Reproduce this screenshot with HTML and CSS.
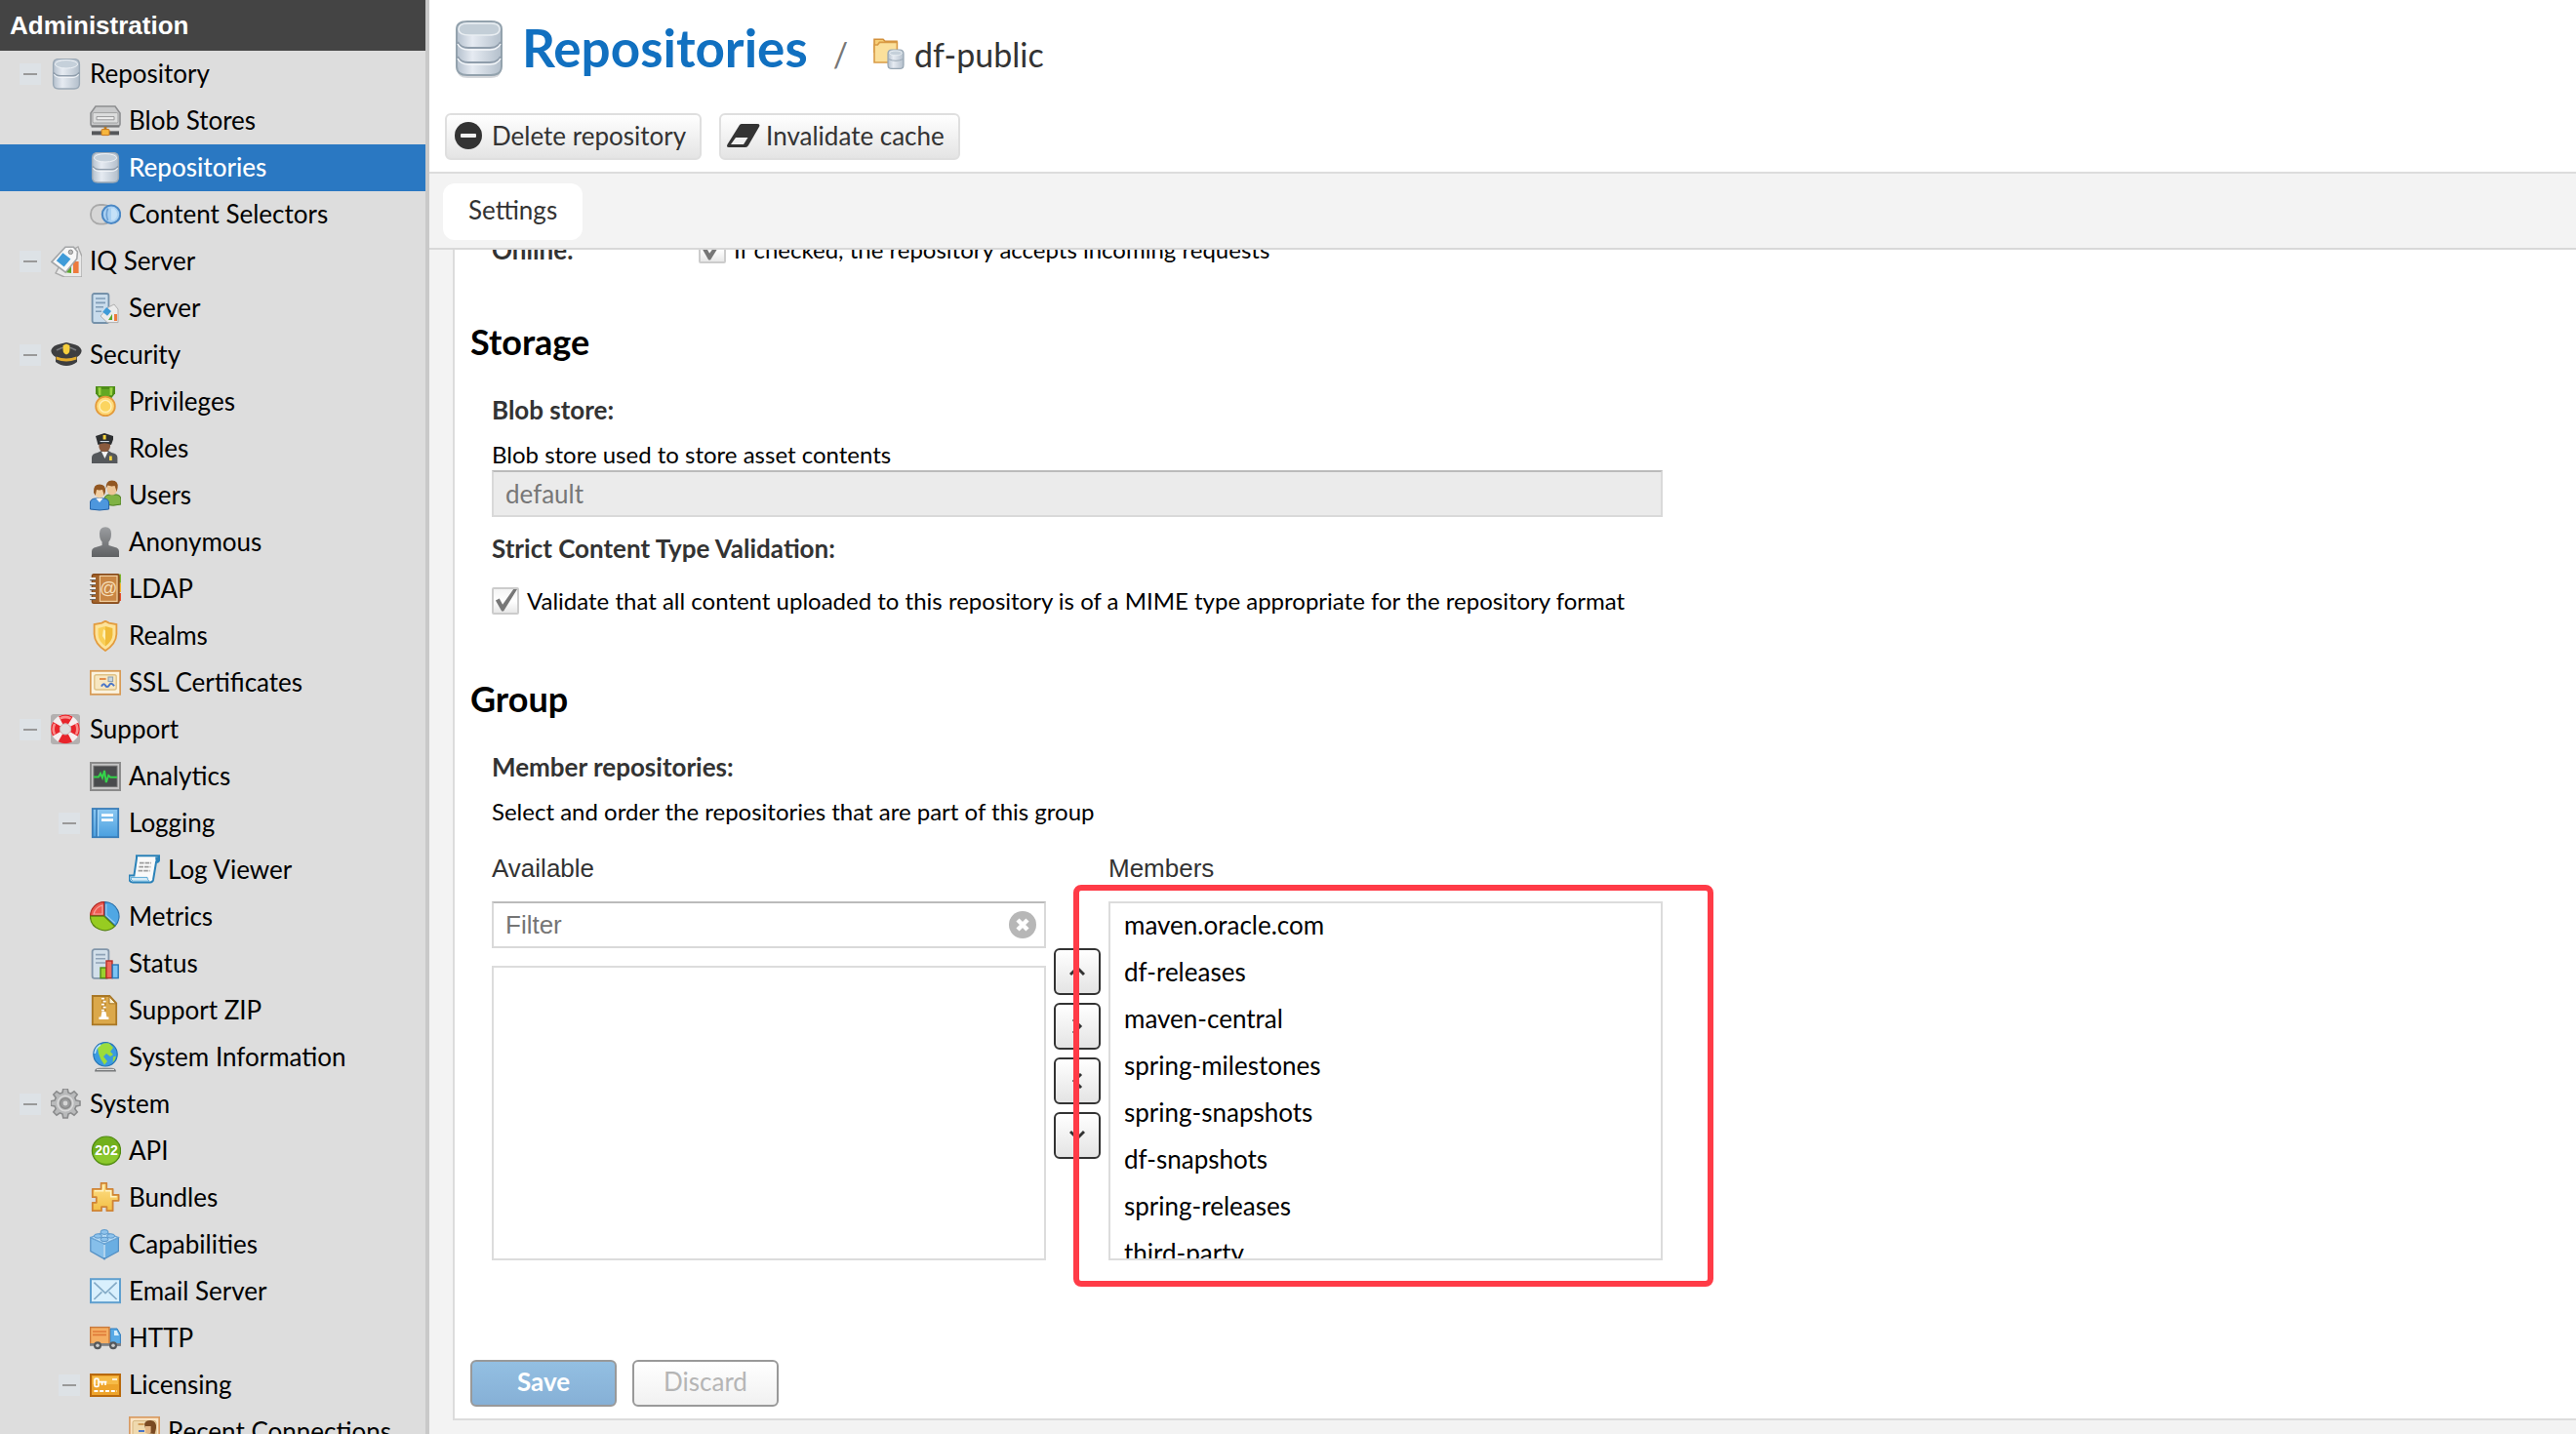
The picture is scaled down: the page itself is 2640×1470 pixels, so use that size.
FILE: index.html
```html
<!DOCTYPE html>
<html lang="en">
<head>
<meta charset="utf-8">
<meta name="viewport" content="width=device-width, initial-scale=1">
<title>Repositories / df-public</title>
<link rel="stylesheet" href="styles.css">
</head>
<body>
<svg class="sprite" aria-hidden="true">
  <defs>
    <linearGradient id="g-steel" x1="0" x2="1" y1="0" y2="0"><stop offset="0" stop-color="#b4c0cd"/><stop offset=".35" stop-color="#e6ebf2"/><stop offset="1" stop-color="#b3bfcb"/></linearGradient>
    <linearGradient id="g-gold" x1="0" x2="0" y1="0" y2="1"><stop offset="0" stop-color="#ffe08a"/><stop offset="1" stop-color="#f2bf45"/></linearGradient>
    <linearGradient id="g-blue" x1="0" x2="0" y1="0" y2="1"><stop offset="0" stop-color="#8cc8f2"/><stop offset="1" stop-color="#4a9fdf"/></linearGradient>
    <linearGradient id="g-grey" x1="0" x2="0" y1="0" y2="1"><stop offset="0" stop-color="#9b9da0"/><stop offset="1" stop-color="#5f6163"/></linearGradient>
  </defs>
  <symbol id="i-db" viewBox="0 0 16 16">
    <path d="M1.300 3Q1.300.3 4 .3h8Q14.700.3 14.700 3v10q0 2.500-2.700 2.500H4Q1.300 15.500 1.300 13z" fill="url(#g-steel)" stroke="#9aa8b5" stroke-width=".7"/>
    <ellipse cx="8" cy="2.900" rx="5.800" ry="2.100" fill="#c5d0da" stroke="#eef2f6" stroke-width=".5"/>
    <path d="M1.500 7.200q1 1.700 3.500 1.700h6q2.500 0 3.500-1.700" fill="none" stroke="#8f9dab" stroke-width=".8"/>
    <path d="M1.700 8.100q1 1.600 3.300 1.600h6q2.300 0 3.300-1.600" fill="none" stroke="#f1f4f8" stroke-width=".6"/>
  </symbol>
  <symbol id="i-db-tall" viewBox="0 0 52 64">
    <path d="M4 10Q4 2 14 2h24q10 0 10 8v40q0 8-10 8H14Q4 58 4 50z" fill="#5a6470" opacity=".25" transform="translate(0 2)"/>
    <path d="M3 10Q3 2 14 2h24q11 0 11 8v38q0 9-11 9H14Q3 57 3 48z" fill="url(#g-steel)" stroke="#93a2ad" stroke-width="2"/>
    <path d="M5 10q0-6 9-6h24q9 0 9 6t-11 6H16Q5 16 5 10z" fill="#c3ced7" stroke="#e9eef2" stroke-width="1.500"/>
    <path d="M4 23q3 6 11 6h22q8 0 11-6M4 38q3 6 11 6h22q8 0 11-6" fill="none" stroke="#8f9dab" stroke-width="1.800"/>
    <path d="M4 25q3 6 11 6h22q8 0 11-6M4 40q3 6 11 6h22q8 0 11-6" fill="none" stroke="#f3f6f9" stroke-width="1.500"/>
  </symbol>
  <symbol id="i-blob" viewBox="0 0 16 16">
    <path d="M3 .5h10l2.500 3.500v5.500q0 1-1 1h-13q-1 0-1-1V4z" fill="#c9cacb" stroke="#8d8e90" stroke-width=".8"/>
    <rect x="1.500" y="3.800" width="13" height="5.200" rx=".6" fill="#dcdddd" stroke="#9fa0a1" stroke-width=".5"/>
    <path d="M3.500 5.800h9v1.600h-9z" fill="#eee" stroke="#979899" stroke-width=".5"/>
    <path d="M.8 10.300h14.400v1H.8z" fill="#77787a"/>
    <path d="M1 13.200h14v2H1z" fill="#55575a"/>
    <path d="M7.300 11h1.400v1.500H7.300z" fill="#b77a24"/>
    <rect x="6" y="12.300" width="4" height="3" rx=".5" fill="#f6b63e" stroke="#c9781c" stroke-width=".5"/>
  </symbol>
  <symbol id="i-selectors" viewBox="0 0 16 16">
    <rect x=".5" y="3" width="11" height="9.800" rx="4.600" fill="#d6d6d6" stroke="#a9a9a9" stroke-width=".9"/>
    <circle cx="11" cy="7.900" r="4.600" fill="#a9d0f2" stroke="#4a87c4" stroke-width="1"/>
    <path d="M9.300 4.800q-1.300 3 0 6.200" fill="none" stroke="#6c9fd2" stroke-width=".8"/>
    <path d="M11 4.800h1.500q1.700 1.400 1.700 3t-1.700 3.100H11z" fill="#c5e1f8"/>
  </symbol>
  <symbol id="i-tags" viewBox="0 0 16 16">
    <path d="M8 4l6-3.500 2 5V16H7l-4.500-2z" fill="#e9e9e9" stroke="#aaa" stroke-width=".7"/>
    <path d="M11.500 8h2.800v6h-2.800z" fill="#ee7a3c"/>
    <path d="M7 13.500L10.500 8v6z" fill="#58a829"/>
    <path d="M7.500.6h4.200l2 2.400-.3 3.600-5.800 7L.5 8.200z" fill="#f7f7f7" stroke="#a3a5a7" stroke-width=".8"/>
    <path d="M6.200 3.600l4 3.200-3.400 4L2.900 7.600z" fill="#3f9bd8"/>
    <circle cx="10.200" cy="3.200" r="1.100" fill="#bbb" stroke="#8a8a8a" stroke-width=".5"/>
  </symbol>
  <symbol id="i-server" viewBox="0 0 16 16">
    <rect x="1.300" y=".5" width="8.400" height="15" rx="1" fill="#c9dcec" stroke="#7591aa" stroke-width=".9"/>
    <path d="M3 3h5M3 5.200h5M3 7.400h4M3 9.600h3" stroke="#7f9cb6" stroke-width=".8"/>
    <path d="M9.500 7.500l3-1.500 2 2.500v6.800H9L5.500 12z" fill="#ececec" stroke="#b0b0b0" stroke-width=".5"/>
    <path d="M8.600 7.500l2.400 2-2 2.400-2.400-2z" fill="#3f9bd8"/>
    <path d="M12.500 11h1.500v3.500h-1.500z" fill="#ee7a3c"/><path d="M9.500 14l2-3v3z" fill="#58a829"/>
  </symbol>
  <symbol id="i-cap" viewBox="0 0 16 16">
    <path d="M.2 5.500Q1 3 5 2.300L8 1.500l3 .8q4 .7 4.800 3.200.1 2-2.300 3.500v2.500Q11 13.500 8 13.500t-5.500-2V9Q.1 7.500.2 5.500z" fill="#3d3e40"/>
    <path d="M3 5.500q5-3 10 0" stroke="#77797c" stroke-width=".8" fill="none"/>
    <path d="M2.800 8.800Q8 10.800 13.200 8.800v1.400q-5.200 2-10.400 0z" fill="#e2ab2e"/>
    <path d="M8 2.200l1.700.8v2.500q0 1.600-1.700 2.300-1.700-.7-1.700-2.300V3z" fill="#f7cf3c"/>
  </symbol>
  <symbol id="i-medal" viewBox="0 0 16 16">
    <path d="M3 0h10v3.600l-2 2.600H5L3 3.600z" fill="#4d8d17"/><path d="M4.200.6h1.600v4H4.500zM10.200.6h1.600l-.3 4h-1.300z" fill="#9bd443"/><path d="M6 1.500h4V5H6z" fill="#62a823"/>
    <circle cx="8" cy="10.200" r="4.900" fill="#ffd978" stroke="#e39a3a" stroke-width=".9"/>
    <circle cx="8" cy="10.200" r="3" fill="#fbd45f" stroke="#fff0b9" stroke-width=".7"/>
  </symbol>
  <symbol id="i-officer" viewBox="0 0 16 16">
    <path d="M1 15.500v-3q0-2 3-2.500L6 9h3.500l1.700 1q3 .5 3 2.500v3z" fill="#55585b"/>
    <path d="M6 9.500h3.400L7.700 13z" fill="#f4f4f4"/>
    <path d="M4.700 4.500h5.800V7Q10 9.600 7.600 9.600 5 9.600 4.700 7z" fill="#8a5a3d"/>
    <path d="M3 1.500L7.500 0 12 1.500v1.800L11 6q-3.400-1.700-6.800 0L3.500 3.300z" fill="#2d2f31"/>
    <path d="M6.800 1h1.500v2.200H6.800zM10 11.800h1.400v2.200H10z" fill="#f5d33d"/><path d="M5.300 4.300h4.600" stroke="#dfe9f4" stroke-width=".5"/>
  </symbol>
  <symbol id="i-users" viewBox="0 0 16 16">
    <path d="M7.500 12.500V10q0-2.200 2.500-2.500h4q2 .3 2 2.500v2.500q-4 1.200-8.500 0z" fill="#7fb244" stroke="#4f7f22" stroke-width=".5"/>
    <ellipse cx="11.400" cy="4.600" rx="2.600" ry="3.200" fill="#edc698"/>
    <path d="M8.300 4.500Q8 .2 11.400.2T14.300 4l-.5 2-1-3q-2 .5-3.600-.2z" fill="#925722"/>
    <path d="M.2 15V12q0-2.300 2.500-2.500h4.600Q9.800 9.700 9.800 12v3q-4.800 1-9.600 0z" fill="#4d97dd" stroke="#2563a6" stroke-width=".5"/>
    <path d="M3.200 9.500h3.500L5 11.500z" fill="#fff"/>
    <ellipse cx="5" cy="6.300" rx="2.500" ry="3" fill="#f2cfa3"/>
    <path d="M2 6.500Q1.700 2.300 5 2.300t3 3.700l-.6 2-.9-3q-1.700.4-3 0L2.900 8z" fill="#925722"/>
  </symbol>
  <symbol id="i-anon" viewBox="0 0 16 16">
    <path d="M5 3.500Q5 .1 8 .1t3 3.400q0 3-1.300 4.300v1.700l4.100 1.200q1.200.5 1.200 1.800v3H1v-3q0-1.300 1.200-1.800l4.100-1.200V7.800Q5 6.500 5 3.500z" fill="url(#g-grey)"/>
  </symbol>
  <symbol id="i-ldap" viewBox="0 0 16 16">
    <path d="M14 .3h2v4.500h-2z" fill="#7db52d"/><path d="M14 5h2v4.500h-2z" fill="#f5b62e"/><path d="M14 10h2v4h-2z" fill="#e5512f"/>
    <rect x="1.200" y=".4" width="13.800" height="14.800" rx=".8" fill="#a2632b" stroke="#85491a" stroke-width=".7"/>
    <rect x="5.200" y="1.200" width="8.800" height="13" fill="#c98644" stroke="#f1cf9f" stroke-width=".6"/>
    <path d="M0 2.500h3M0 5h3M0 7.500h3M0 10h3M0 12.500h3" stroke="#eee" stroke-width="1.100"/><path d="M0 3.300h3M0 5.800h3M0 8.300h3M0 10.800h3M0 13.300h3" stroke="#676767" stroke-width=".5"/>
  </symbol>
  <symbol id="i-shield" viewBox="0 0 16 16">
    <path d="M8 .3l1.800 1 3.900.7v5Q13.500 12 8 15.500 2.500 12 2.300 7V2l3.900-.7z" fill="#fde39a" stroke="#e39b3d" stroke-width=".9"/>
    <path d="M8 3l3.700 1v3.500Q11.500 10.700 8 13.200z" fill="#f0bb38"/><path d="M8 3L4.300 4v3.500Q4.500 10.700 8 13.200z" fill="#f9cf57"/>
    <path d="M7 4.500l1 .8v5L6.500 8z" fill="#fff0b5"/>
  </symbol>
  <symbol id="i-cert" viewBox="0 0 16 16">
    <rect x=".4" y="1.900" width="15.200" height="12" fill="#fbf3df" stroke="#d79a55" stroke-width=".9"/>
    <rect x="2.400" y="3.900" width="11.200" height="7.600" rx="1" fill="#f7e7c1" stroke="#dfc286" stroke-width=".7"/>
    <path d="M5 6h3.300" stroke="#e0853f" stroke-width=".9"/><rect x="9.500" y="5" width="2.300" height="2.300" fill="#c9d6df" stroke="#8aa0b0" stroke-width=".5"/>
    <path d="M6 9.800q1-2 2-.5t2-.2 2.500.5" fill="none" stroke="#4a76c8" stroke-width="1"/>
  </symbol>
  <symbol id="i-buoy" viewBox="0 0 16 16">
    <path d="M1.500 0h12q1.500 0 1.500 1.500v12.500q0 1.500-1.500 1.500h-12Q0 15.500 0 14V1.500Q0 0 1.500 0z" fill="#b3b0b0"/>
    <circle cx="7.500" cy="7.700" r="5.100" fill="none" stroke="#f6eeee" stroke-width="4.600"/>
    <circle cx="7.500" cy="7.700" r="5.100" fill="none" stroke="#e8242b" stroke-width="4.600" stroke-dasharray="5.200 2.810" stroke-dashoffset="2.600"/>
    <path d="M4.800 2.200q2.700-1.300 5.400 0M2 5q-1.300 2.700 0 5.400M13 5q1.300 2.700 0 5.400" fill="none" stroke="#fa8e8c" stroke-width="1.300"/>
    <circle cx="7.500" cy="7.700" r="2.800" fill="#ddd" stroke="#c9b3b3" stroke-width=".5"/>
  </symbol>
  <symbol id="i-monitor" viewBox="0 0 16 16">
    <rect x=".5" y="1" width="15" height="14" fill="#c6c6c6" stroke="#8b8b8b"/>
    <rect x="2" y="2.600" width="12" height="10.600" fill="#494b4d" stroke="#707070" stroke-width=".5"/>
    <path d="M2 8.200h2.500l1-1.700 1 2.200L7.500 5l.9 6 1.200-3.500 1 .9H14" fill="none" stroke="#35d24a" stroke-width="1"/>
  </symbol>
  <symbol id="i-book" viewBox="0 0 16 16">
    <rect x="1.400" y=".5" width="13.200" height="14.600" fill="url(#g-blue)" stroke="#3a7db8" stroke-width=".9"/>
    <path d="M3.500.5v14.600" stroke="#3a7db8" stroke-width=".8"/><path d="M4.300 1.200v13.400" stroke="#a9d8f7" stroke-width=".6"/>
    <path d="M6 3.800h6M6 6.300h6" stroke="#fff" stroke-width="1.400"/>
  </symbol>
  <symbol id="i-scroll" viewBox="0 0 16 16">
    <path d="M4 .6h11.500v2.200q0 1.200-1.500 1.200L12.500 13q-.3 1.200-1.500 1.200H2q-1.800 0-1.800-2v-1.400h2.500L4 2z" fill="#fafafa" stroke="#2b82b8" stroke-width="1"/>
    <path d="M13.600 1.200L13.800 4h1q1-.3.900-1.500V1z" fill="#2b82b8"/><path d="M1 11.700h8.500q0 1.400 1 1.900H2.300Q1 13.500 1 11.700z" fill="#d7ecf7" stroke="#5aa9d6" stroke-width=".5"/>
    <path d="M5.500 4.300h6M5.200 6.300h6M4.800 8.300h6" stroke="#9c9c9c" stroke-width=".9" stroke-dasharray="2.300 .5"/>
  </symbol>
  <symbol id="i-pie" viewBox="0 0 16 16">
    <path d="M7.600 7.300V.3A7.300 7.300 0 0 1 13 12.600z" fill="#4fa7e4" stroke="#2a6da6" stroke-width=".6"/>
    <path d="M7.300 7.300H.3A7.200 7.200 0 0 1 7.300.3z" fill="#ee5a50" stroke="#b02a24" stroke-width=".6"/>
    <path d="M7.400 7.600l5.400 5.200A7.500 7.500 0 0 1 .2 7.600z" fill="#97cc21" stroke="#55830f" stroke-width=".6"/>
    <path d="M6.500 2q-3.500 1-4.500 4.500h4.500zM8.400 1.500v5.700l4.500 4" fill="none" stroke="#fff" stroke-opacity=".45" stroke-width=".6"/>
  </symbol>
  <symbol id="i-status" viewBox="0 0 16 16">
    <rect x="1.300" y=".6" width="8.400" height="14.800" rx="1.200" fill="#d2dfea" stroke="#8296aa" stroke-width=".9"/>
    <path d="M3 3.300h5M3 5.400h5M3 7.500h5" stroke="#8fa3b7" stroke-width=".8"/>
    <rect x="5.500" y="10" width="3" height="5.300" fill="#9bd02f" stroke="#4f8c12" stroke-width=".7"/>
    <rect x="8.500" y="6.500" width="3" height="8.800" fill="#ef6a5e" stroke="#b92d26" stroke-width=".7"/>
    <rect x="11.600" y="8.500" width="3" height="6.800" fill="#7cc4f4" stroke="#2a77b6" stroke-width=".7"/>
  </symbol>
  <symbol id="i-zip" viewBox="0 0 16 16">
    <path d="M1.400.5h8.800l3.400 3.700v11H1.400z" fill="#dba84a" stroke="#a97724" stroke-width=".9"/>
    <path d="M10 .8v3.600h3.300z" fill="#fff3d3" stroke="#a97724" stroke-width=".5"/>
    <path d="M6 1v8h2.300V1z" fill="#c48d2f"/><path d="M6 1.800h1.500M6.800 3.300h1.500M6 4.800h1.500M6.800 6.300h1.500M6 7.800h1.500" stroke="#fff" stroke-width=".9"/>
    <path d="M6.200 8.500h2l.5 2.700h1v1.300H4.700v-1.300h1z" fill="#fff"/>
  </symbol>
  <symbol id="i-globe" viewBox="0 0 16 16">
    <path d="M2.500 15.300q0-1.900 2.500-1.900h6q2.500 0 2.500 1.900z" fill="#77797b"/><path d="M3.500 14.200h9" stroke="#ddd" stroke-width=".6"/>
    <circle cx="8" cy="6.400" r="6.100" fill="#3a9be0" stroke="#2574b5" stroke-width=".6"/>
    <path d="M4 3q2.500-3 6-2.200l2 2.200-1.500 2L12 6.500l-1.500 1L8.500 6 7 7.500l2 2.500-1.500 1.800L5.700 9 4.500 6z" fill="#9bdc3c"/>
    <path d="M12 7.800l1.500-.5q-.3 2-1.700 3.200z" fill="#9bdc3c"/>
    <path d="M2.600 6Q3 2.800 5.500 1.500" fill="none" stroke="#b9e2fb" stroke-width=".8"/>
  </symbol>
  <symbol id="i-gear" viewBox="0 0 16 16">
    <path d="M6.400 0h2.200l.4 2 1.300.6 1.700-1.200 1.600 1.600-1.200 1.700.6 1.300 2 .4v2.200l-2 .4-.6 1.300 1.200 1.700-1.600 1.600-1.700-1.200-1.300.6-.4 2H6.400L6 13l-1.300-.6L3 13.600 1.400 12l1.200-1.700L2 9 0 8.600V6.400L2 6l.6-1.300L1.400 3 3 1.400l1.700 1.200L6 2z" fill="#b9babb" stroke="#8a8b8c" stroke-width=".8"/>
    <circle cx="7.500" cy="7.500" r="2.700" fill="#9b9c9d" stroke="#888" stroke-width=".7"/><circle cx="7.500" cy="7.500" r="1.200" fill="#d5d5d5"/>
    <circle cx="7.500" cy="7.500" r="3.900" fill="none" stroke="#dadada" stroke-width=".8"/>
  </symbol>
  <symbol id="i-api" viewBox="0 0 16 16">
    <circle cx="8.500" cy="7.800" r="7.300" fill="#72b01d" stroke="#4f8a10" stroke-width=".6"/>
    <path d="M2 9.500h13q-1 4.700-6.500 4.900Q3 14.200 2 9.500z" fill="#8cc92d"/>
  </symbol>
  <symbol id="i-puzzle" viewBox="0 0 16 16">
    <path d="M5.800.4h2.800v3h3.200v3h3v3h-3v5.200H8.700v-2H6v2H1.400v-4.200h2V7.600h-2V3.400h4.400z" fill="url(#g-gold)" stroke="#cf8437" stroke-width=".9" stroke-linejoin="round"/>
    <path d="M6.800 1.400v3h-4.300M8 4.400h2.800v3h3" fill="none" stroke="#fff3c4" stroke-width=".7"/>
  </symbol>
  <symbol id="i-cube" viewBox="0 0 16 16">
    <path d="M.4 4.300L7.500 7.300v8L.4 11.300z" fill="#86bfea" stroke="#5490c4" stroke-width=".6"/>
    <path d="M14.700 4.300L7.500 7.300v8l7.200-4z" fill="#6aaee2" stroke="#5490c4" stroke-width=".6"/>
    <path d="M.4 4.300L7.500 1.300l7.200 3-7.200 3.200z" fill="#b8dcf6" stroke="#6ba4d4" stroke-width=".6"/>
    <g fill="#8ec3ec" stroke="#5b97ca" stroke-width=".5"><ellipse cx="7.500" cy="1.500" rx="2" ry="1.200"/><ellipse cx="4.200" cy="3.500" rx="2" ry="1.100"/><ellipse cx="10.800" cy="3.500" rx="2" ry="1.100"/><ellipse cx="7.500" cy="5.200" rx="2" ry="1.100"/></g>
    <path d="M7.500 8v6.500" stroke="#d3ebfb" stroke-width=".7"/>
  </symbol>
  <symbol id="i-mail" viewBox="0 0 16 16">
    <rect x=".5" y="1.600" width="15" height="12" fill="#d9f0fd" stroke="#5f9fce" stroke-width="1"/>
    <path d="M2.200 3.300l5.800 5.500 5.800-5.500M2.200 12l4-3.800M13.800 12l-4-3.800" fill="none" stroke="#83aac6" stroke-width=".8"/>
  </symbol>
  <symbol id="i-truck" viewBox="0 0 16 16">
    <path d="M10.500 3H14l1.700 3v5.500h-5.200z" fill="#58aae6" stroke="#2f7dbd" stroke-width=".5"/><path d="M12.500 4h1.300l1.200 2.500h-2.500z" fill="#d6eefb"/>
    <rect x=".3" y="2.300" width="9.700" height="8.600" fill="#f5ae62" stroke="#c9783a" stroke-width=".7"/>
    <path d="M1.500 4.500h7M1.500 6.200h7" stroke="#e07a38" stroke-width=".8"/>
    <path d="M0 10.500h16v1.400H0z" fill="#7d7f82"/>
    <circle cx="4" cy="11.600" r="2" fill="#55585b"/><circle cx="4" cy="11.600" r=".9" fill="#ccc"/><circle cx="12" cy="11.600" r="2" fill="#55585b"/><circle cx="12" cy="11.600" r=".9" fill="#ccc"/>
  </symbol>
  <symbol id="i-license" viewBox="0 0 16 16">
    <rect x=".5" y="2.500" width="15" height="11" fill="#eea42b" stroke="#b8690d" stroke-width="1"/>
    <path d="M1.500 3.500h13v4h-13z" fill="#f6bb48"/>
    <rect x="2.500" y="4.700" width="2" height="4" rx=".5" fill="none" stroke="#fff" stroke-width=".8"/><path d="M4.700 6.300h4M6.300 6.300v1.700M8 6.300v1.700M11.500 5h2.500" stroke="#fff" stroke-width=".8"/>
    <path d="M2.200 11h11.800" stroke="#fff" stroke-width=".9" stroke-dasharray="2 .9"/>
  </symbol>
  <symbol id="i-recent" viewBox="0 0 16 16">
    <rect x=".4" y=".4" width="15.200" height="15" fill="#fbe6c8" stroke="#d79a62" stroke-width=".9"/>
    <rect x="2" y="2.200" width="12" height="11" rx="1" fill="#efd9ae" stroke="#d6b67f" stroke-width=".5"/>
    <path d="M4.800 4h3" stroke="#c98c44" stroke-width=".8"/><path d="M5 7.500h3" stroke="#4a76c8" stroke-width="1"/>
    <path d="M8 4q.5-2.200 3.300-2Q14.300 2.300 14 6l-.7 3L9 8.500z" fill="#7a4a22"/><path d="M8.500 5h2.800v3.300q-1.500 1-2.800 0z" fill="#e3b888"/>
  </symbol>
  <symbol id="i-folder-db" viewBox="0 0 16 16">
    <path d="M.5.600h4.500l1 1h6v5.500H.5z" fill="#f7cf77" stroke="#d3913c" stroke-width=".8"/>
    <path d="M.5 12.500v-9h1.700l1-1.300h9v10.300z" fill="#fbe09b" stroke="#d99b45" stroke-width=".8"/>
    <path d="M7.500 8q0-2 2-2h4q2 0 2 2v5.700q0 2-2 2h-4q-2 0-2-2z" fill="url(#g-steel)" stroke="#96a5b2" stroke-width=".6"/>
    <ellipse cx="11.500" cy="7.700" rx="3.200" ry="1.200" fill="#c5d0da" stroke="#eef2f6" stroke-width=".4"/>
    <path d="M7.800 10.800q3.700 1.700 7.400 0" fill="none" stroke="#9aa8b5" stroke-width=".5"/>
  </symbol>
</svg>

<div class="app">
  <nav class="sidebar" aria-labelledby="nav-title">
    <h2 class="sidebar-title" id="nav-title">Administration</h2>
    <ul class="tree">
      <li><div class="node"><button class="toggle" aria-label="Collapse Repository"></button><a href="#repository"><svg class="icon"><use href="#i-db"/></svg><span>Repository</span></a></div>
        <ul class="level-2">
          <li><a class="leaf" href="#blobstores"><svg class="icon"><use href="#i-blob"/></svg><span>Blob Stores</span></a></li>
          <li><a class="leaf selected" href="#repositories" aria-current="page"><svg class="icon"><use href="#i-db"/></svg><span>Repositories</span></a></li>
          <li><a class="leaf" href="#selectors"><svg class="icon"><use href="#i-selectors"/></svg><span>Content Selectors</span></a></li>
        </ul>
      </li>
      <li><div class="node"><button class="toggle" aria-label="Collapse IQ Server"></button><a href="#iq"><svg class="icon"><use href="#i-tags"/></svg><span>IQ Server</span></a></div>
        <ul class="level-2">
          <li><a class="leaf" href="#server"><svg class="icon"><use href="#i-server"/></svg><span>Server</span></a></li>
        </ul>
      </li>
      <li><div class="node"><button class="toggle" aria-label="Collapse Security"></button><a href="#security"><svg class="icon"><use href="#i-cap"/></svg><span>Security</span></a></div>
        <ul class="level-2">
          <li><a class="leaf" href="#privileges"><svg class="icon"><use href="#i-medal"/></svg><span>Privileges</span></a></li>
          <li><a class="leaf" href="#roles"><svg class="icon"><use href="#i-officer"/></svg><span>Roles</span></a></li>
          <li><a class="leaf" href="#users"><svg class="icon"><use href="#i-users"/></svg><span>Users</span></a></li>
          <li><a class="leaf" href="#anonymous"><svg class="icon"><use href="#i-anon"/></svg><span>Anonymous</span></a></li>
          <li><a class="leaf" href="#ldap"><svg class="icon" viewBox="0 0 16 16"><use href="#i-ldap"/><text x="9.600" y="10.300" class="glyph-at" text-anchor="middle">@</text></svg><span>LDAP</span></a></li>
          <li><a class="leaf" href="#realms"><svg class="icon"><use href="#i-shield"/></svg><span>Realms</span></a></li>
          <li><a class="leaf" href="#ssl"><svg class="icon"><use href="#i-cert"/></svg><span>SSL Certificates</span></a></li>
        </ul>
      </li>
      <li><div class="node"><button class="toggle" aria-label="Collapse Support"></button><a href="#support"><svg class="icon"><use href="#i-buoy"/></svg><span>Support</span></a></div>
        <ul class="level-2">
          <li><a class="leaf" href="#analytics"><svg class="icon"><use href="#i-monitor"/></svg><span>Analytics</span></a></li>
          <li><div class="node"><button class="toggle" aria-label="Collapse Logging"></button><a href="#logging"><svg class="icon"><use href="#i-book"/></svg><span>Logging</span></a></div>
            <ul class="level-3">
              <li><a class="leaf" href="#logviewer"><svg class="icon"><use href="#i-scroll"/></svg><span>Log Viewer</span></a></li>
            </ul>
          </li>
          <li><a class="leaf" href="#metrics"><svg class="icon"><use href="#i-pie"/></svg><span>Metrics</span></a></li>
          <li><a class="leaf" href="#status"><svg class="icon"><use href="#i-status"/></svg><span>Status</span></a></li>
          <li><a class="leaf" href="#supportzip"><svg class="icon"><use href="#i-zip"/></svg><span>Support ZIP</span></a></li>
          <li><a class="leaf" href="#sysinfo"><svg class="icon"><use href="#i-globe"/></svg><span>System Information</span></a></li>
        </ul>
      </li>
      <li><div class="node"><button class="toggle" aria-label="Collapse System"></button><a href="#system"><svg class="icon"><use href="#i-gear"/></svg><span>System</span></a></div>
        <ul class="level-2">
          <li><a class="leaf" href="#api"><svg class="icon" viewBox="0 0 16 16"><use href="#i-api"/><text x="8.500" y="10" class="glyph-code" text-anchor="middle">202</text></svg><span>API</span></a></li>
          <li><a class="leaf" href="#bundles"><svg class="icon"><use href="#i-puzzle"/></svg><span>Bundles</span></a></li>
          <li><a class="leaf" href="#capabilities"><svg class="icon"><use href="#i-cube"/></svg><span>Capabilities</span></a></li>
          <li><a class="leaf" href="#email"><svg class="icon"><use href="#i-mail"/></svg><span>Email Server</span></a></li>
          <li><a class="leaf" href="#http"><svg class="icon"><use href="#i-truck"/></svg><span>HTTP</span></a></li>
          <li><div class="node"><button class="toggle" aria-label="Collapse Licensing"></button><a href="#licensing"><svg class="icon"><use href="#i-license"/></svg><span>Licensing</span></a></div>
            <ul class="level-3">
              <li><a class="leaf" href="#recent"><svg class="icon"><use href="#i-recent"/></svg><span>Recent Connections</span></a></li>
            </ul>
          </li>
        </ul>
      </li>
    </ul>
  </nav>

  <main class="main">
    <header class="header">
      <div class="breadcrumb">
        <svg class="title-icon"><use href="#i-db-tall"/></svg>
        <div class="crumbs">
          <h1><a href="#repositories">Repositories</a></h1>
          <span class="slash">/</span>
          <span class="current"><svg class="icon"><use href="#i-folder-db"/></svg>df-public</span>
        </div>
      </div>
      <div class="actions">
        <button class="action"><svg class="action-icon" viewBox="0 0 28 28"><circle cx="14" cy="14" r="14" fill="#333"/><rect x="6" y="12" width="16" height="4" rx="1" fill="#f2f2f2"/></svg>Delete repository</button>
        <button class="action action-erase"><svg class="erase-icon" viewBox="0 0 34 24"><path d="M15 0h16q3.500 0 2 3L22 22q-1 2-3 2H2q-3 0-1.500-3L13 1q1-1 2-1z" fill="#333"/><path d="M9 14h12.500l-4.500 7H4z" fill="#f0f0f0"/></svg>Invalidate cache</button>
      </div>
    </header>

    <div class="tabs"><button class="tab" role="tab" aria-selected="true">Settings</button></div>

    <div class="viewport">
      <form class="panel">
        <div class="online">
          <span class="label">Online:</span>
          <label class="check-line"><input class="check" type="checkbox" checked>If checked, the repository accepts incoming requests</label>
        </div>

        <section class="group">
          <h2>Storage</h2>
          <div class="fields">
            <label class="label" for="blob">Blob store:</label>
            <p class="help">Blob store used to store asset contents</p>
            <input class="text" id="blob" type="text" value="default" disabled>
            <div class="label label-next">Strict Content Type Validation:</div>
            <label class="check-line check-strict"><input class="check" type="checkbox" checked>Validate that all content uploaded to this repository is of a MIME type appropriate for the repository format</label>
          </div>
        </section>

        <section class="group">
          <h2>Group</h2>
          <div class="fields">
            <div class="label">Member repositories:</div>
            <p class="help">Select and order the repositories that are part of this group</p>
            <div class="picker">
              <div class="column">
                <label class="column-title" for="filter">Available</label>
                <div class="filter">
                  <input class="text" id="filter" type="text" placeholder="Filter">
                  <button class="clear" type="button" aria-label="Clear"><svg viewBox="0 0 28 28"><circle cx="14" cy="14" r="14" fill="#b7b7b7"/><path d="M9 9l10 10M19 9L9 19" stroke="#fff" stroke-width="4.500"/></svg></button>
                </div>
                <ul class="list"></ul>
              </div>
              <div class="movers">
                <button type="button" aria-label="Move up"><svg viewBox="0 0 16 16"><path d="M1 11l7-7 7 7"/></svg></button>
                <button type="button" aria-label="Add"><svg viewBox="0 0 16 16"><path d="M4 1l7 7-7 7"/></svg></button>
                <button type="button" aria-label="Remove"><svg viewBox="0 0 16 16"><path d="M12 1L5 8l7 7"/></svg></button>
                <button type="button" aria-label="Move down"><svg viewBox="0 0 16 16"><path d="M1 4l7 7 7-7"/></svg></button>
              </div>
              <div class="column">
                <div class="column-title" id="members">Members</div>
                <ul class="list" aria-labelledby="members">
                  <li>maven.oracle.com</li>
                  <li>df-releases</li>
                  <li>maven-central</li>
                  <li>spring-milestones</li>
                  <li>spring-snapshots</li>
                  <li>df-snapshots</li>
                  <li>spring-releases</li>
                  <li>third-party</li>
                </ul>
              </div>
              <div class="callout"></div>
            </div>
          </div>
        </section>

        <div class="buttons">
          <button class="save" type="submit" disabled>Save</button>
          <button class="discard" type="reset" disabled>Discard</button>
        </div>
      </form>
    </div>
  </main>
</div>
</body>
</html>
```
FILE: styles.css
```css
* { box-sizing: border-box; }

body {
  margin: 0;
  font: 26px/32px Lato, "Liberation Sans", sans-serif;
  color: #000;
  background: #f3f3f3;
}

ul { list-style: none; margin: 0; padding: 0; }
h1, h2, p { margin: 0; }
a { color: inherit; text-decoration: none; }
button, input { font: inherit; color: inherit; margin: 0; }

.sprite { position: absolute; width: 0; height: 0; }
.glyph-at { font: 9px "Liberation Sans", sans-serif; fill: #f6dfba; }
.glyph-code { font: bold 7px "Liberation Sans", sans-serif; fill: #fff; }

.app { display: flex; height: 100vh; overflow: hidden; }

/* Navigation tree */
.sidebar {
  flex: none;
  width: 440px;
  overflow: hidden;
  background: #ddd;
  border-right: 4px solid #c9c9c9;
}
.sidebar-title {
  padding: 0 10px;
  background: #444;
  color: #fff;
  font: bold 26px/52px "Liberation Sans", Arial, sans-serif;
}
.node, .node a, .leaf { display: flex; align-items: center; height: 48px; }
.node { padding-left: 20px; gap: 10px; }
.node a, .leaf { gap: 8px; white-space: nowrap; }
.level-2 .leaf { padding-left: 92px; }
.level-2 .node { padding-left: 60px; }
.level-2 .level-3 .leaf { padding-left: 132px; }
.leaf span, .node span { padding-bottom: 2px; }
.selected { background: #2a78c2; color: #fff; font-weight: 500; }
.icon { flex: none; width: 32px; height: 32px; }
.toggle {
  display: grid;
  place-items: center;
  width: 22px;
  height: 22px;
  padding: 0;
  border: 0;
  background: #dde2e6;
}
.toggle::before { content: ""; width: 14px; height: 2px; background: #999; }

/* Header */
.main { flex: 1; min-width: 0; display: flex; flex-direction: column; }
.header {
  padding: 20px 16px 12px;
  background: #fff;
  border-bottom: 2px solid #dcdcdc;
}
.breadcrumb { display: flex; gap: 18px; padding-left: 9px; height: 64px; }
.title-icon { width: 52px; height: 64px; }
.crumbs { display: flex; align-items: baseline; gap: 26px; line-height: 58px; }
h1 { font-size: 53px; line-height: 58px; color: #1170c0; }
.slash { font-size: 34px; color: #777; }
.current { font-size: 34px; color: #333; }
.current .icon { margin-right: 10px; vertical-align: -2px; }
.actions { display: flex; gap: 18px; margin-top: 32px; }
.action {
  display: flex;
  align-items: center;
  gap: 10px;
  height: 48px;
  padding: 0 14px 2px 8px;
  border: 2px solid #dfdfdf;
  border-radius: 6px;
  background: linear-gradient(#fff, #e4e4e4);
  color: #333;
}
.action-erase { gap: 6px; padding-left: 6px; }
.action-icon { width: 28px; height: 28px; }
.erase-icon { width: 34px; height: 24px; }

.tabs { padding: 10px 14px 8px; border-bottom: 2px solid #d8d8d8; }
.tab {
  display: block;
  height: 58px;
  padding: 0 26px 4px;
  border: 0;
  border-radius: 12px;
  background: #fff;
  color: #333;
}

/* Settings form, scrolled part-way down */
.viewport { flex: 1; min-height: 0; overflow: hidden; padding-left: 24px; }
.panel {
  margin-top: -16px;
  padding: 0 16px 12px;
  background: #fff;
  border: 2px solid #dcdcdc;
  border-width: 0 0 2px 2px;
}
.label { display: block; font-weight: 700; color: #333; }
.online { display: grid; grid-template-columns: 212px 1fr; padding-left: 22px; }
.check-line { display: flex; align-items: center; gap: 8px; font-size: 24px; }
.check {
  appearance: none;
  display: grid;
  width: 28px;
  height: 28px;
  border: 2px solid #ccc;
  border-radius: 2px;
  background: linear-gradient(#f4f4f4, #fff, #e8e8e8);
}
.check::before {
  content: "";
  background: #777;
  clip-path: polygon(8% 48%, 24% 40%, 38% 66%, 84% 0, 100% 0, 42% 94%, 34% 94%);
}
.group { padding-top: 58px; }
.group h2 { font-size: 36px; line-height: 40px; }
.fields { max-width: 1222px; padding: 34px 0 0 22px; }
.help { margin-top: 14px; font-size: 24px; }
.text {
  display: block;
  width: 100%;
  height: 48px;
  padding: 0 12px;
  border: 2px solid #d9d9d9;
  border-top-color: #bbb;
  border-radius: 0;
  background: #fff;
}
.text:disabled { background: #ebebeb; color: #777; }
.label-next { margin-top: 16px; }
.check-strict { margin: 22px 0 6px; }

/* Member picker */
.picker {
  position: relative;
  display: grid;
  grid-template-columns: 1fr 48px 1fr;
  gap: 8px;
  margin-top: 26px;
  height: 418px;
}
.column { display: flex; flex-direction: column; gap: 18px; min-height: 0; }
.column-title { color: #333; }
.column-title, .filter { font-family: "Liberation Sans", Arial, sans-serif; }
.filter { position: relative; }
.filter .text::placeholder { color: #757575; opacity: 1; }
.clear {
  position: absolute;
  top: 10px;
  right: 10px;
  width: 28px;
  height: 28px;
  padding: 0;
  border: 0;
  background: none;
}
.clear svg { display: block; }
.list { flex: 1; min-height: 0; overflow: hidden; border: 2px solid #dcdcdc; }
.list li { padding: 0 14px 4px; line-height: 44px; }
.movers { display: flex; flex-direction: column; gap: 8px; padding-top: 98px; }
.movers button {
  display: grid;
  place-items: center;
  height: 48px;
  padding: 0;
  border: 2px solid #333;
  border-radius: 6px;
  background: linear-gradient(#fff, #e4e4e4);
}
.movers svg { width: 16px; height: 16px; fill: none; stroke: #333; stroke-width: 3; }
.callout {
  position: absolute;
  top: 33px;
  right: -52px;
  width: 656px;
  height: 412px;
  border: 6px solid #ff3b47;
  border-radius: 8px;
  pointer-events: none;
}

.buttons { display: flex; gap: 16px; margin-top: 102px; }
.buttons button {
  width: 150px;
  height: 48px;
  padding: 0 0 4px;
  border: 2px solid #999;
  border-radius: 6px;
}
.buttons .save { background: linear-gradient(#93bfe2, #86b0d6); color: #fff; font-weight: 700; }
.buttons .discard { background: linear-gradient(#fff, #f1f1f1); color: #b5b5b5; }
```
